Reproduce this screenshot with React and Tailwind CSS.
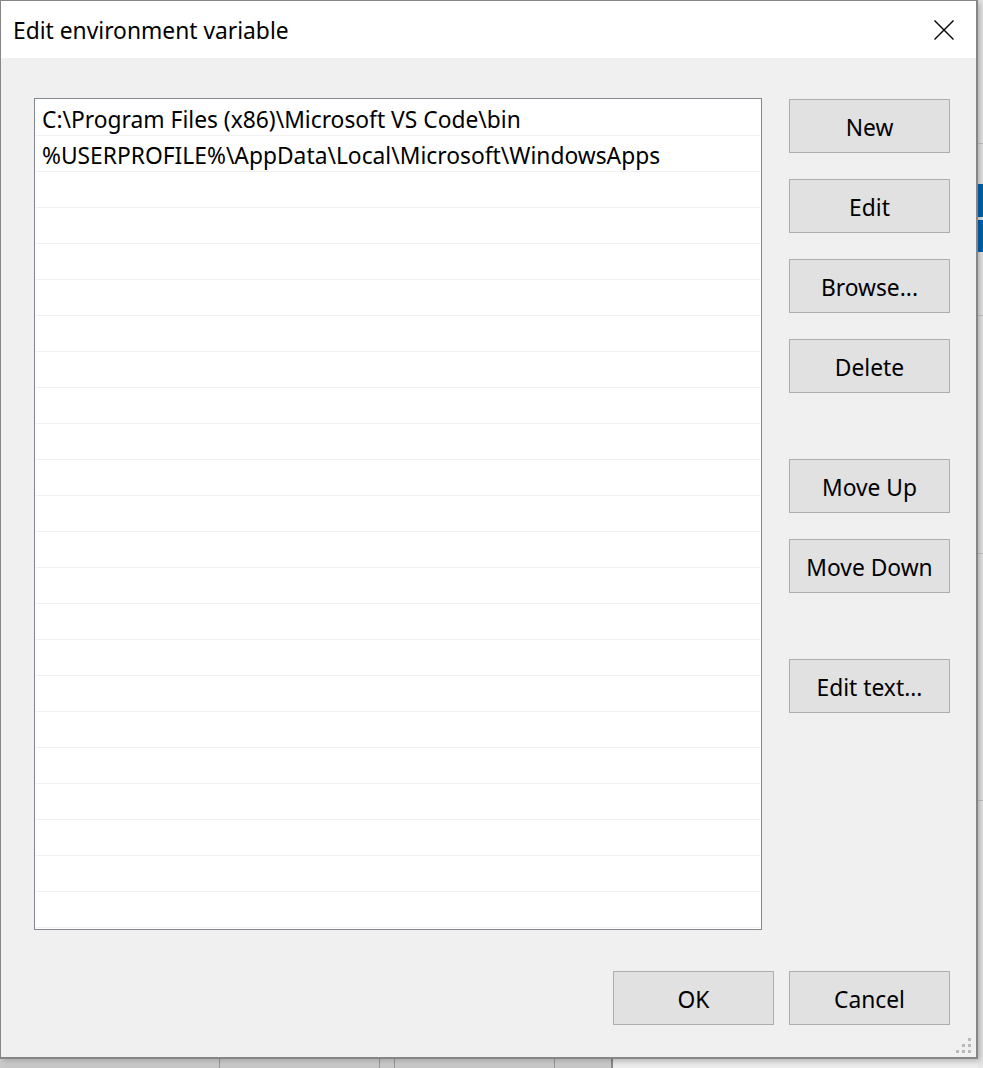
import React from "react";

const rows = [
  "C:\\Program Files (x86)\\Microsoft VS Code\\bin",
  "%USERPROFILE%\\AppData\\Local\\Microsoft\\WindowsApps",
];

function Btn({ children, className = "" }) {
  return (
    <button
      type="button"
      className={
        "flex h-[54px] w-[161px] items-center justify-center border border-[#adadad] bg-[#e1e1e1] pt-[4px] text-[22.8px] leading-none text-black " +
        className
      }
    >
      {children}
    </button>
  );
}

export default function App() {
  const list = Array.from({ length: 23 }, (_, i) => rows[i] || "");
  return (
    <div
      className="relative h-[1068px] w-[983px] overflow-hidden bg-[#ececec]"
      style={{ fontFamily: '"Segoe UI", "Noto Sans", sans-serif' }}
    >
      {/* windows behind the dialog */}
      <div className="absolute left-0 top-[1059px] h-[9px] w-[613px] bg-gradient-to-b from-[#d6d6d6] to-[#c6c6c6]">
        <div className="absolute left-[219px] top-0 h-full w-px bg-[#9a9a9a]" />
        <div className="absolute left-[379px] top-0 h-full w-px bg-[#9a9a9a]" />
        <div className="absolute left-[394px] top-0 h-full w-px bg-[#9a9a9a]" />
        <div className="absolute left-[554px] top-0 h-full w-px bg-[#9a9a9a]" />
        <div className="absolute left-[611px] top-0 h-full w-[2px] bg-[#8a8a8a]" />
      </div>
      <div className="absolute left-[978px] top-0 h-[1068px] w-[5px] bg-[#e6e6e6]">
        <div className="absolute left-0 top-[143px] h-px w-full bg-[#c4c4c4]" />
        <div className="absolute left-0 top-[184px] h-[33px] w-full bg-[#0063b1]" />
        <div className="absolute left-0 top-[220px] h-[32px] w-full bg-[#0063b1]" />
        <div className="absolute left-0 top-[315px] h-px w-full bg-[#c4c4c4]" />
        <div className="absolute left-0 top-[553px] h-px w-full bg-[#c4c4c4]" />
        <div className="absolute left-0 top-[800px] h-px w-full bg-[#c4c4c4]" />
      </div>

      {/* dialog */}
      <div className="relative flex h-[1059px] w-[978px] flex-col border-b-2 border-l border-r-2 border-t border-[#868686] bg-[#f0f0f0] shadow-[2px_2px_6px_rgba(0,0,0,0.25)]">
        {/* title bar */}
        <div className="flex h-[57px] shrink-0 items-center justify-between bg-white pl-[12px] pr-[22px]">
          <span className="pt-[3px] text-[22.8px] leading-none text-black">Edit environment variable</span>
          <svg width="20" height="20" viewBox="0 0 20 20" className="block">
            <path d="M0.5 0.5 L19.5 19.5 M19.5 0.5 L0.5 19.5" stroke="#000" strokeWidth="1.4" fill="none" />
          </svg>
        </div>

        {/* body */}
        <div className="flex flex-1 flex-col">
          <div className="flex pl-[33px] pt-[40px]">
            <div className="h-[832px] w-[728px] border border-[#828790] bg-white p-px">
              {list.map((t, i) => (
                <div
                  key={i}
                  className="h-[36px] overflow-hidden whitespace-nowrap border-b border-[#f0f0f0] pl-[6px] pt-[4px] text-[22.8px] leading-[31px] text-black"
                >
                  {t}
                </div>
              ))}
            </div>
            <div className="ml-[27px] flex flex-col pt-px">
              <Btn>New</Btn>
              <Btn className="mt-[26px]">Edit</Btn>
              <Btn className="mt-[26px]">Browse...</Btn>
              <Btn className="mt-[26px]">Delete</Btn>
              <Btn className="mt-[66px]">Move Up</Btn>
              <Btn className="mt-[26px]">Move Down</Btn>
              <Btn className="mt-[66px]">Edit text...</Btn>
            </div>
          </div>
          <div className="mt-[41px] flex justify-end gap-[15px] pr-[26px]">
            <Btn>OK</Btn>
            <Btn>Cancel</Btn>
          </div>
        </div>

        {/* resize grip */}
        <svg width="15" height="15" viewBox="0 0 15 15" className="absolute bottom-[4px] right-[5px] block">
          <g fill="#b9b9b9">
            <rect x="12" y="0" width="3" height="3" />
            <rect x="6" y="6" width="3" height="3" />
            <rect x="12" y="6" width="3" height="3" />
            <rect x="0" y="12" width="3" height="3" />
            <rect x="6" y="12" width="3" height="3" />
            <rect x="12" y="12" width="3" height="3" />
          </g>
        </svg>
      </div>
    </div>
  );
}
